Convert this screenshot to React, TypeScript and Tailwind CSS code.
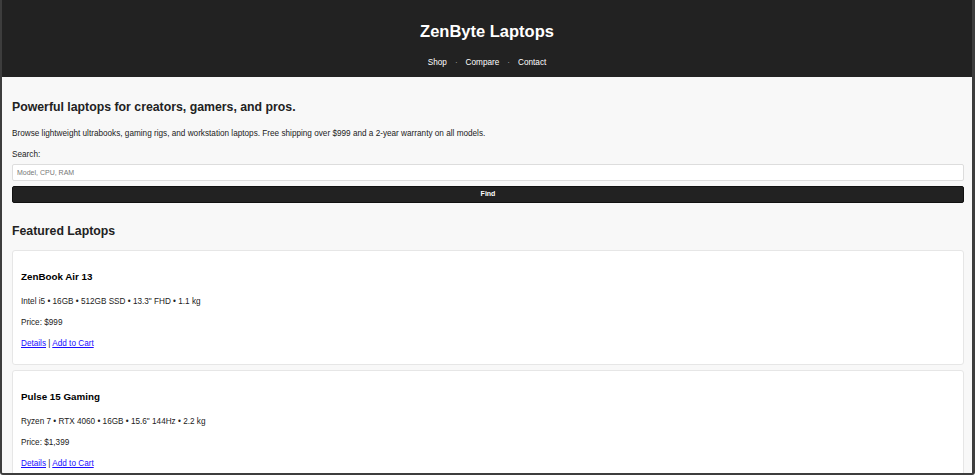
import React from "react";

type Laptop = {
  name: string;
  specs: string;
  price: string;
};

const laptops: Laptop[] = [
  {
    name: "ZenBook Air 13",
    specs: "Intel i5 • 16GB • 512GB SSD • 13.3\" FHD • 1.1 kg",
    price: "$999",
  },
  {
    name: "Pulse 15 Gaming",
    specs: "Ryzen 7 • RTX 4060 • 16GB • 15.6\" 144Hz • 2.2 kg",
    price: "$1,399",
  },
];

const LaptopCard = ({ laptop }: { laptop: Laptop }) => (
  <div className="rounded-[3px] border border-[#e6e6e6] bg-white px-[8px] pt-[19px] pb-[14px]">
    <h3 className="text-[9.8px] font-bold leading-[14px] text-black">{laptop.name}</h3>
    <p className="mt-[12px] text-[8.2px] leading-[12px] text-[#222]">{laptop.specs}</p>
    <p className="mt-[9px] text-[8.2px] leading-[12px] text-[#222]">Price: {laptop.price}</p>
    <p className="mt-[9px] text-[8.2px] leading-[12px] text-[#222]">
      <a href="#" className="text-[#1a0dff] underline">
        Details
      </a>{" "}
      |{" "}
      <a href="#" className="text-[#1a0dff] underline">
        Add to Cart
      </a>
    </p>
  </div>
);

const App = () => {
  return (
    <div
      className="h-[475px] w-[975px] overflow-hidden rounded-b-[3px] border-r-[3px] border-b-2 border-l-2 border-[#3d3d3d] bg-[#f8f8f8]"
      style={{ fontFamily: '"Liberation Sans", Arial, sans-serif' }}
    >
      <header className="flex h-[77px] flex-col items-center bg-[#222] text-white">
        <h1 className="mt-[21px] text-[16.5px] font-bold leading-[20px]">ZenByte Laptops</h1>
        <nav className="mt-[16px] flex items-center text-[8.2px] leading-[12px]">
          <a href="#">Shop</a>
          <span className="mx-[8px] text-[#999]">·</span>
          <a href="#">Compare</a>
          <span className="mx-[8px] text-[#999]">·</span>
          <a href="#">Contact</a>
        </nav>
      </header>

      <main className="pr-[8px] pl-[10px] text-[#222]">
        <h2 className="mt-[22px] text-[12.3px] font-bold leading-[16px]">
          Powerful laptops for creators, gamers, and pros.
        </h2>
        <p className="mt-[13px] text-[8.2px] leading-[12px]">
          Browse lightweight ultrabooks, gaming rigs, and workstation laptops. Free shipping over $999 and a
          2-year warranty on all models.
        </p>
        <label className="mt-[9px] block text-[8.2px] leading-[12px]">Search:</label>
        <input
          type="text"
          placeholder="Model, CPU, RAM"
          className="mt-[3px] block h-[17px] w-full rounded-[2px] border border-[#ddd] bg-white px-[4px] text-[7px] placeholder:text-[#777]"
        />
        <button className="mt-[5px] block h-[17px] w-full rounded-[2px] border border-[#111] bg-[#222] text-[7px] font-bold text-white">
          Find
        </button>

        <h2 className="mt-[20px] text-[12.3px] font-bold leading-[16px]">Featured Laptops</h2>
        <div className="mt-[11px] flex flex-col gap-[5px]">
          {laptops.map((l) => (
            <LaptopCard key={l.name} laptop={l} />
          ))}
        </div>
      </main>
    </div>
  );
};

export default App;
